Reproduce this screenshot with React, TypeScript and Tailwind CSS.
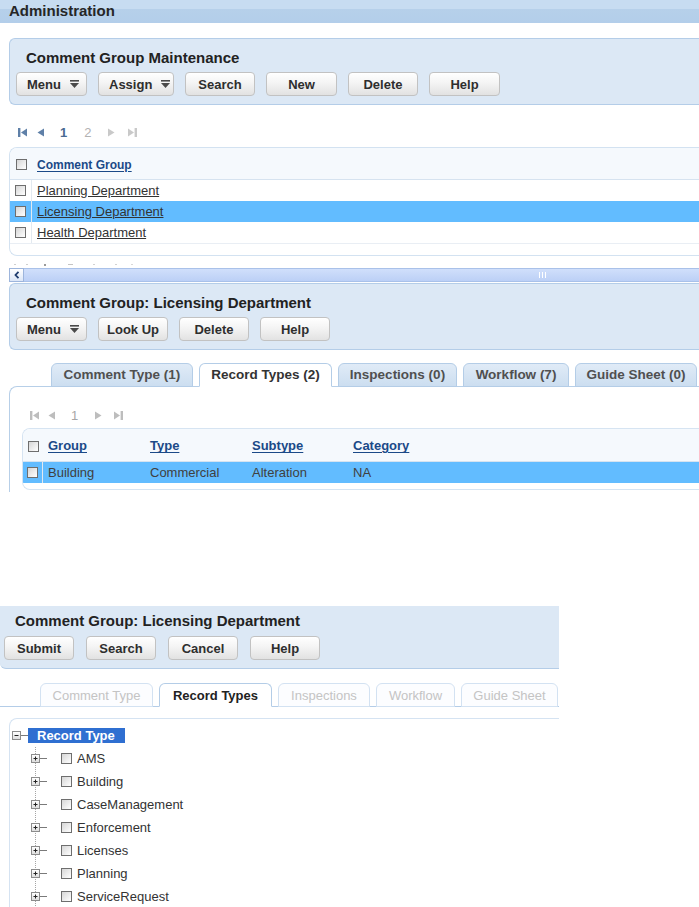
import React from "react";

const btnBase =
  "h-[24px] flex items-center justify-center rounded-[4px] border border-[#c2c2c2] bg-[linear-gradient(#ffffff,#f4f4f4_45%,#e2e2e2)] text-[13px] font-bold text-[#2e2e2e] leading-none shadow-[inset_0_1px_0_#ffffff]";

function Caret() {
  return (
    <svg width="9" height="8" viewBox="0 0 9 8" className="ml-[9px] fill-[#4a4a4a]">
      <rect x="0" y="0" width="9" height="1.6" />
      <path d="M0 3H9L4.5 8Z" />
    </svg>
  );
}

function Button({ label, w, caret }: { label: string; w: string; caret?: boolean }) {
  return (
    <button className={`${btnBase} ${w} ${caret ? "!justify-start pl-[10px]" : ""}`}>
      <span>{label}</span>
      {caret && <Caret />}
    </button>
  );
}

function Box() {
  return (
    <span className="block w-[11px] h-[11px] border border-[#6e6e6e] bg-[linear-gradient(135deg,#d6d6d6,#ffffff)]" />
  );
}

function First({ color }: { color: string }) {
  return (
    <svg width="9" height="9" viewBox="0 0 9 9" style={{ fill: color }}>
      <rect x="0" y="0" width="2.4" height="9" />
      <path d="M9 0.5L3 4.5L9 8.5Z" />
    </svg>
  );
}
function Prev({ color }: { color: string }) {
  return (
    <svg width="7" height="9" viewBox="0 0 7 9" style={{ fill: color }}>
      <path d="M7 0.5L0.5 4.5L7 8.5Z" />
    </svg>
  );
}
function Next({ color }: { color: string }) {
  return (
    <svg width="7" height="9" viewBox="0 0 7 9" style={{ fill: color }}>
      <path d="M0 0.5L6.5 4.5L0 8.5Z" />
    </svg>
  );
}
function Last({ color }: { color: string }) {
  return (
    <svg width="9" height="9" viewBox="0 0 9 9" style={{ fill: color }}>
      <path d="M0 0.5L6 4.5L0 8.5Z" />
      <rect x="6.6" y="0" width="2.4" height="9" />
    </svg>
  );
}

function TabA({ label, w, active }: { label: string; w: string; active?: boolean }) {
  return (
    <div
      className={`${w} h-[24px] flex items-center justify-center rounded-t-[6px] border border-[#b4cde7] text-[13.5px] font-bold leading-none ${
        active
          ? "bg-white border-b-white text-[#333]"
          : "bg-[linear-gradient(#e0ebf7,#ccdef0)] text-[#505050]"
      }`}
    >
      {label}
    </div>
  );
}

function TabB({ label, w, active }: { label: string; w: string; active?: boolean }) {
  return (
    <div
      className={`${w} h-[24px] flex items-center justify-center rounded-t-[6px] border text-[13px] leading-none ${
        active
          ? "bg-white border-[#b4cde7] border-b-white font-bold text-[#222]"
          : "bg-[#fcfdff] border-[#d3e2f2] text-[#c4c4c4]"
      }`}
    >
      {label}
    </div>
  );
}

function Toggle({ minus }: { minus?: boolean }) {
  return (
    <span className="flex items-center justify-center w-[9px] h-[9px] border border-[#8c8c8c] bg-[linear-gradient(#ffffff,#dedede)]">
      <svg width="7" height="7" viewBox="0 0 7 7" className="stroke-[#222]" strokeWidth="1">
        <path d="M1.5 3.5H5.5" />
        {!minus && <path d="M3.5 1.5V5.5" />}
      </svg>
    </span>
  );
}

const groups = ["Planning Department", "Licensing Department", "Health Department"];
const recordTypes = ["AMS", "Building", "CaseManagement", "Enforcement", "Licenses", "Planning", "ServiceRequest"];

export default function App() {
  return (
    <div className="w-[699px] h-[907px] overflow-hidden bg-white font-['Liberation_Sans',Arial,sans-serif] text-[#333]">
      {/* page header */}
      <div className="h-[23px] pl-[9px] pt-[2px] bg-[linear-gradient(#c7dcf1_0,#c7dcf1_9px,#b6d0ea_9px,#b3ceea_100%)]">
        <span className="block text-[15px] leading-[17px] font-bold text-[#262626]">Administration</span>
      </div>

      {/* maintenance panel */}
      <div className="mt-[15px] ml-[9px] h-[67px] border border-r-0 border-[#b4cde8] rounded-l-[6px] bg-[#dce8f5] pt-[10px] pl-[6px]">
        <div className="pl-[10px] text-[15px] leading-[17px] font-bold text-[#222]">Comment Group Maintenance</div>
        <div className="mt-[6px] flex gap-[11px]">
          <Button label="Menu" w="w-[71px]" caret />
          <Button label="Assign" w="w-[76px]" caret />
          <Button label="Search" w="w-[70px]" />
          <Button label="New" w="w-[71px]" />
          <Button label="Delete" w="w-[70px]" />
          <Button label="Help" w="w-[71px]" />
        </div>
      </div>

      {/* pager */}
      <div className="mt-[18px] h-[19px] flex items-center pl-[18px]">
        <First color="#5f80a8" />
        <span className="ml-[10px]">
          <Prev color="#5f80a8" />
        </span>
        <span className="ml-[16px] text-[13px] font-bold text-[#4a6a92] leading-none">1</span>
        <span className="ml-[17px] text-[13px] text-[#b2b2b2] leading-none">2</span>
        <span className="ml-[17px]">
          <Next color="#c9c9c9" />
        </span>
        <span className="ml-[13px]">
          <Last color="#c9c9c9" />
        </span>
      </div>

      {/* comment group list */}
      <div className="mt-[5px] ml-[9px] border border-r-0 border-[#d3e2f1] rounded-l-[8px] overflow-hidden">
        <div className="h-[32px] bg-[#f5f9fd] border-b border-[#d6e3f0] flex items-center">
          <div className="w-[22px] flex justify-center pt-[2px]">
            <Box />
          </div>
          <span className="pl-[5px] pt-[2px] text-[12px] font-bold text-[#1b4a88] underline underline-offset-2">
            Comment Group
          </span>
        </div>
        {groups.map((g, i) => (
          <div key={g} className={`h-[21px] flex ${i === 1 ? "bg-[#62bcff]" : "bg-white"}`}>
            <div className="w-[22px] flex items-center justify-center border-r border-[#e2e9f0]">
              <Box />
            </div>
            <span className="pl-[5px] flex items-center text-[13px] text-[#333] underline">{g}</span>
          </div>
        ))}
        <div className="h-[12px] border-t border-[#e9eef4]" />
      </div>

      {/* clipped footer remnants + horizontal scrollbar */}
      <div className="h-[12px] pl-[14px] pt-[8px] flex items-start gap-[10px]">
        <span className="w-[2px] h-px bg-[#cfcfcf]" />
        <span className="w-[2px] h-px bg-[#cfcfcf]" />
        <span className="ml-[6px] w-[2px] h-[2px] bg-[#9a9a9a]" />
        <span className="ml-[12px] w-[5px] h-px bg-[#c4c4c4]" />
        <span className="ml-[10px] w-[2px] h-px bg-[#d2d2d2]" />
        <span className="ml-[10px] w-[2px] h-px bg-[#d2d2d2]" />
        <span className="ml-[4px] w-[2px] h-px bg-[#d8d8d8]" />
      </div>
      <div className="ml-[9px] h-[14px] flex">
        <div className="w-[15px] border border-[#9db5dc] bg-[linear-gradient(#ffffff,#dbe6f7)] flex items-center justify-center">
          <svg width="6" height="8" viewBox="0 0 6 8" className="stroke-[#1e3c6e]" strokeWidth="1.8" fill="none">
            <path d="M4.5 0.8L1.5 4L4.5 7.2" />
          </svg>
        </div>
        <div className="flex-1 border-y border-[#a9c1e9] bg-[linear-gradient(#d0dffb,#bcd0f6)] flex items-center">
          <div className="ml-[515px] flex gap-[2px]">
            <span className="w-px h-[6px] bg-white" />
            <span className="w-px h-[6px] bg-white" />
            <span className="w-px h-[6px] bg-white" />
          </div>
        </div>
      </div>

      {/* detail panel */}
      <div className="mt-[1px] ml-[9px] h-[67px] border border-r-0 border-[#b4cde8] rounded-l-[6px] bg-[#dce8f5] pt-[10px] pl-[6px]">
        <div className="pl-[10px] text-[15px] leading-[17px] font-bold text-[#222]">
          Comment Group: Licensing Department
        </div>
        <div className="mt-[6px] flex gap-[11px]">
          <Button label="Menu" w="w-[71px]" caret />
          <Button label="Look Up" w="w-[70px]" />
          <Button label="Delete" w="w-[70px]" />
          <Button label="Help" w="w-[70px]" />
        </div>
      </div>

      {/* tabs */}
      <div className="mt-[13px] ml-[51px] flex gap-[6px] relative z-10 -mb-px">
        <TabA label="Comment Type (1)" w="w-[142px]" />
        <TabA label="Record Types (2)" w="w-[133px]" active />
        <TabA label="Inspections (0)" w="w-[119px]" />
        <TabA label="Workflow (7)" w="w-[106px]" />
        <TabA label="Guide Sheet (0)" w="w-[122px]" />
      </div>
      <div className="ml-[9px] border-t border-l border-[#b7cfe8] rounded-tl-[8px] pt-[19px] pb-[2px]">
        <div className="h-[18px] flex items-center pl-[20px]">
          <First color="#bdbdbd" />
          <span className="ml-[9px]">
            <Prev color="#bdbdbd" />
          </span>
          <span className="ml-[16px] text-[13px] text-[#a6a6a6] leading-none">1</span>
          <span className="ml-[17px]">
            <Next color="#bdbdbd" />
          </span>
          <span className="ml-[12px]">
            <Last color="#bdbdbd" />
          </span>
        </div>
        <div className="mt-[4px] ml-[12px] border border-r-0 border-[#d6e4f2] rounded-l-[8px] overflow-hidden">
          <div className="h-[33px] bg-[#f5f9fd] border-b border-[#d6e3f0] flex items-center text-[13px] font-bold text-[#1b4a88]">
            <div className="w-[20px] flex justify-center pt-[2px]">
              <Box />
            </div>
            <span className="w-[102px] pl-[5px] pt-[2px]">
              <span className="underline underline-offset-2">Group</span>
            </span>
            <span className="w-[102px] pl-[5px] pt-[2px]">
              <span className="underline underline-offset-2">Type</span>
            </span>
            <span className="w-[101px] pl-[5px] pt-[2px]">
              <span className="underline underline-offset-2">Subtype</span>
            </span>
            <span className="pl-[5px] pt-[2px]">
              <span className="underline underline-offset-2">Category</span>
            </span>
          </div>
          <div className="h-[21px] flex bg-[#62bcff] text-[13px] text-[#404040]">
            <div className="w-[20px] flex items-center justify-center border-r border-[#e2e9f0]">
              <Box />
            </div>
            <span className="w-[102px] pl-[5px] flex items-center">Building</span>
            <span className="w-[102px] pl-[5px] flex items-center">Commercial</span>
            <span className="w-[101px] pl-[5px] flex items-center">Alteration</span>
            <span className="pl-[5px] flex items-center">NA</span>
          </div>
          <div className="h-[6px]" />
        </div>
      </div>

      {/* edit panel */}
      <div className="mt-[114px] w-[559px] h-[63px] border-b border-[#b4cde8] rounded-bl-[6px] bg-[#dce8f5] pt-[6px]">
        <div className="pl-[15px] text-[15px] leading-[17px] font-bold text-[#222]">
          Comment Group: Licensing Department
        </div>
        <div className="mt-[7px] pl-[4px] flex gap-[12px]">
          <Button label="Submit" w="w-[70px]" />
          <Button label="Search" w="w-[70px]" />
          <Button label="Cancel" w="w-[70px]" />
          <Button label="Help" w="w-[70px]" />
        </div>
      </div>

      <div className="mt-[14px] ml-[40px] flex gap-[6px] relative z-10 -mb-px">
        <TabB label="Comment Type" w="w-[113px]" />
        <TabB label="Record Types" w="w-[113px]" active />
        <TabB label="Inspections" w="w-[92px]" />
        <TabB label="Workflow" w="w-[79px]" />
        <TabB label="Guide Sheet" w="w-[97px]" />
      </div>
      <div className="w-[559px] border-t border-[#b4cde8]" />

      {/* record type tree */}
      <div className="mt-[11px] ml-[9px] w-[550px] h-[300px] border-t border-l border-[#d5e3f2] rounded-tl-[8px] pt-[5px]">
        <div className="h-[23px] flex items-center">
          <span className="ml-[2px]">
            <Toggle minus />
          </span>
          <span className="w-[7px] h-px bg-[#7a7a7a]" />
          <span className="h-[15px] pl-[9px] pr-[10px] bg-[#2f6fd1] text-white text-[13px] font-bold leading-[15px]">
            Record Type
          </span>
        </div>
        <div className="ml-[25px] border-l border-dotted border-[#a5a5a5]">
          {recordTypes.map((r) => (
            <div key={r} className="h-[23px] flex items-center">
              <span className="-ml-[5px]">
                <Toggle />
              </span>
              <span className="w-[7px] h-px bg-[#7a7a7a]" />
              <span className="ml-[14px]">
                <Box />
              </span>
              <span className="ml-[5px] text-[13px] text-[#333]">{r}</span>
            </div>
          ))}
        </div>
      </div>
    </div>
  );
}
